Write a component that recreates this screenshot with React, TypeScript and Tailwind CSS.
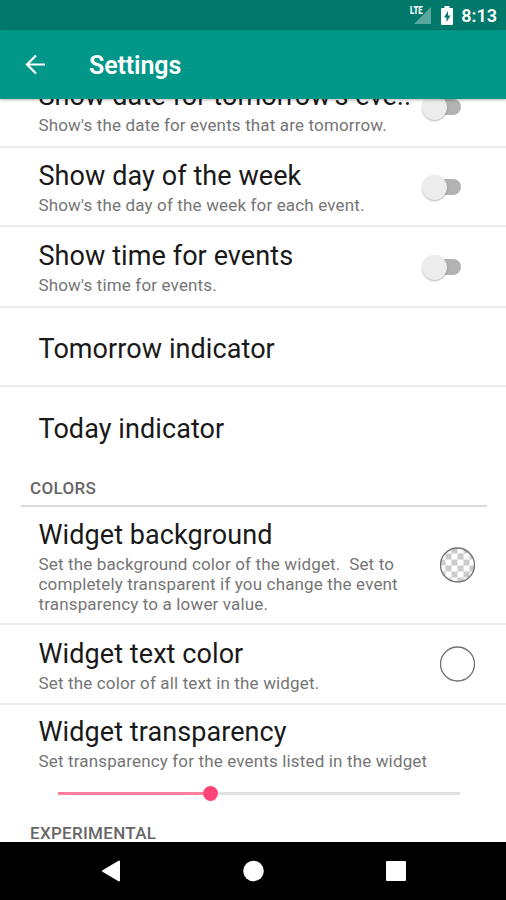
import { useState } from 'react';
import type { ReactNode } from 'react';

interface PreferenceProps {
  title: string;
  summary?: string;
  className: string;
  children?: ReactNode;
}

function Preference({ title, summary, className, children }: PreferenceProps) {
  return (
    <div className={`flex shrink-0 justify-between pl-[38.5px] ${className}`}>
      <div className="min-w-0 shrink-0">
        <h2 className="whitespace-nowrap text-[27px] leading-[32px] tracking-[0.08px] text-[#191919]">{title}</h2>
        {summary && (
          <p className="mt-[3px] whitespace-pre text-[17px] leading-[20px] tracking-[0.15px] text-[#757575]">
            {summary}
          </p>
        )}
      </div>
      {children}
    </div>
  );
}

function Toggle({ label }: { label: string }) {
  const [on, setOn] = useState(false);

  return (
    <button
      type="button"
      role="switch"
      aria-checked={on}
      aria-label={label}
      onClick={() => setOn(!on)}
      className={`mr-[45px] mt-[14px] flex h-[26px] w-[39px] shrink-0 items-center ${on ? 'flex-row-reverse' : ''}`}
    >
      <span className={`z-[1] h-[25px] w-[25px] rounded-full shadow-[0_1px_2px_rgba(0,0,0,0.28)] ${on ? 'bg-[#009688]' : 'bg-[#ececec]'}`} />
      <span className={`h-4 w-[26px] shrink-0 rounded-full ${on ? '-mr-[12px] bg-[#80cbc4]' : '-ml-[12px] bg-[#b2b2b2]'}`} />
    </button>
  );
}

function Swatch({ checkered = false }: { checkered?: boolean }) {
  return (
    <svg width="36" height="36" viewBox="0 0 36 36" className="-mt-[3px] mr-[30px] shrink-0">
      <defs>
        <pattern id="checker" x="-0.5" y="0.5" width="12" height="12" patternUnits="userSpaceOnUse">
          <rect width="12" height="12" fill="#ffffff" />
          <rect x="0" y="0" width="6" height="6" fill="#cbcbcb" />
          <rect x="6" y="6" width="6" height="6" fill="#cbcbcb" />
        </pattern>
      </defs>
      <circle cx="17.5" cy="18" r="17" fill={checkered ? 'url(#checker)' : '#ffffff'} stroke="#737373" strokeWidth="1.3" />
    </svg>
  );
}

function StatusBar() {
  return (
    <div className="flex h-[30px] shrink-0 items-center justify-end bg-[#00796b] pr-[9px] text-white">
      <svg width="24" height="20" viewBox="0 0 24 20" className="mr-[9px]">
        <path d="M23 2v17H6z" fill="#ffffff" fillOpacity="0.35" />
        <text x="2" y="9" fontSize="10" fontWeight="900" fill="#ffffff" fontFamily="Roboto, sans-serif" textLength="12.500" lengthAdjust="spacingAndGlyphs">
          LTE
        </text>
      </svg>
      <svg width="12" height="19" viewBox="0 0 12 19" className="mr-[8px]">
        <path d="M3.500 0h5v2H11a1 1 0 0 1 1 1v15a1 1 0 0 1-1 1H1a1 1 0 0 1-1-1V3a1 1 0 0 1 1-1h2.500z" fill="#ffffff" />
        <path d="M7 5 3 11.500h2.500V16l4-6.500H7z" fill="#00796b" />
      </svg>
      <span className="pt-[2px] text-[18px] font-semibold leading-[28px]">8:13</span>
    </div>
  );
}

export default function App() {
  return (
    <div className="flex h-[900px] w-[506px] flex-col overflow-hidden bg-white font-['Roboto',sans-serif]">
      <StatusBar />
      <header className="relative z-10 flex h-[69px] shrink-0 items-center bg-[#009688] pl-[25px] text-white shadow-[0_1px_3px_rgba(0,0,0,0.3)]">
        <svg width="21" height="20" viewBox="0 0 21 20" fill="none" stroke="#ffffff" strokeWidth="2.200" className="mr-[43px]">
          <path d="M20 9.500H2M11 .5 2 9.500l9 9" />
        </svg>
        <h1 className="pt-[2px] text-[25px] font-semibold leading-[32px] tracking-[-0.1px]">Settings</h1>
      </header>

      <main className="min-h-0 flex-1 overflow-hidden">
        <div className="-mt-8 flex flex-col">
          <Preference title="Show date for tomorrow's eve.." summary="Show's the date for events that are tomorrow." className="h-[81px] border-b-2 border-[#ececec] pt-[13px]">
            <Toggle label="Show date for tomorrow's events" />
          </Preference>
          <Preference title="Show day of the week" summary="Show's the day of the week for each event." className="h-[79px] border-b-2 border-[#ececec] pt-[12px]">
            <Toggle label="Show day of the week" />
          </Preference>
          <Preference title="Show time for events" summary="Show's time for events." className="h-[81px] border-b-2 border-[#ececec] pt-[13px]">
            <Toggle label="Show time for events" />
          </Preference>
          <Preference title="Tomorrow indicator" className="h-[79px] border-b-2 border-[#ececec] pt-[25px]" />
          <Preference title="Today indicator" className="h-[83px] pt-[26px]" />

          <div className="ml-[21px] mr-[19px] flex h-[37px] items-center border-b-2 border-[#dadada] pl-[9px] pt-[2px] text-[17px] font-medium tracking-[0.35px] text-[#666666]">
            COLORS
          </div>

          <Preference
            title="Widget background"
            summary={'Set the background color of the widget.\u00a0 Set to\ncompletely transparent if you change the event\ntransparency to a lower value.'}
            className="h-[118px] items-center border-b-2 border-[#ececec] pt-[3px]"
          >
            <Swatch checkered />
          </Preference>
          <Preference title="Widget text color" summary="Set the color of all text in the widget." className="h-20 items-center border-b-2 border-[#ececec] pt-[3px]">
            <Swatch />
          </Preference>
          <Preference title="Widget transparency" summary="Set transparency for the events listed in the widget" className="h-[68px] pt-[11px]" />

          <div className="ml-[58px] flex h-[40px] w-[402px] shrink-0 items-center">
            <div className="h-[3px] w-[145px] bg-[#ff7f9c]" />
            <div className="h-[15px] w-[15px] rounded-full bg-[#ff4577]" />
            <div className="h-[3px] flex-1 bg-[#e0e0e0]" />
          </div>

          <div className="pl-[30px] pt-[8px] text-[17px] font-medium leading-[24px] tracking-[0.3px] text-[#666666]">EXPERIMENTAL</div>
        </div>
      </main>

      <nav className="flex h-[58px] shrink-0 items-center justify-center bg-black">
        <svg width="506" height="58" viewBox="0 0 506 58" fill="#ffffff" stroke="#ffffff" strokeLinejoin="round">
          <path d="M103 29l16-9.500v19z" strokeWidth="2" />
          <circle cx="253.500" cy="29" r="10.300" stroke="none" />
          <rect x="387" y="20" width="18" height="18" strokeWidth="2" />
        </svg>
      </nav>
    </div>
  );
}
